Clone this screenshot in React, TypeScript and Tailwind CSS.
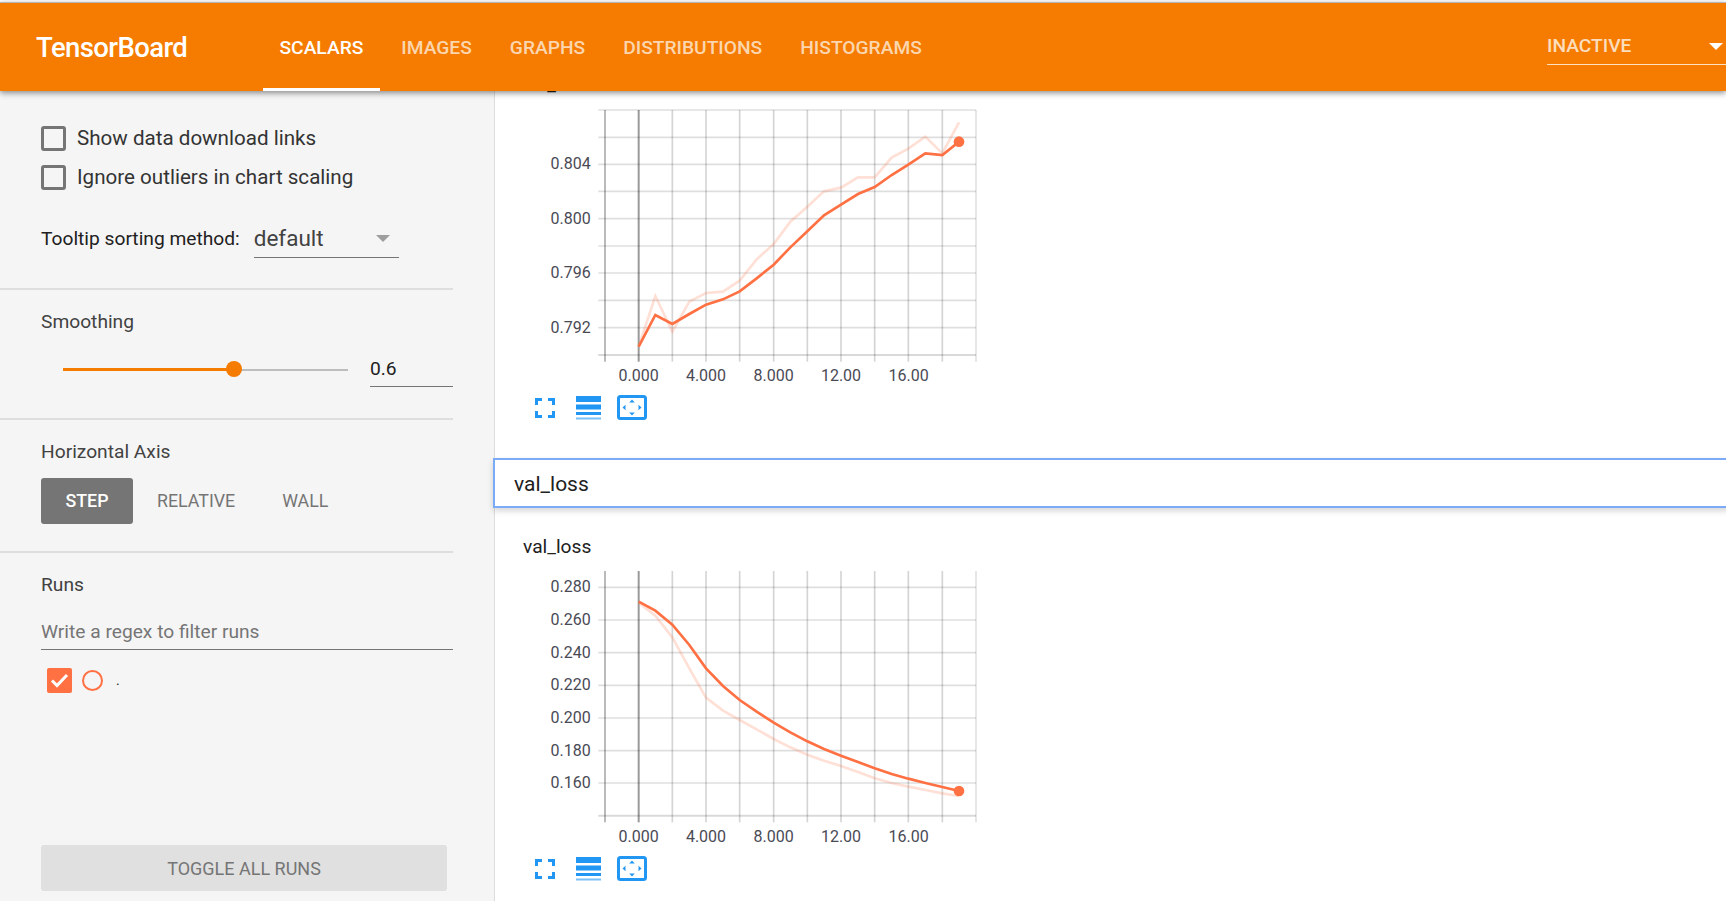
import React from "react";

type Point = [number, number];

type ChartType = {
  top: number;
  hLines: number[];
  bottom: number;
  hasTopLine?: boolean;
  labels: { y: number; text: string }[];
  smooth: Point[];
  raw: Point[];
};

const xLines = [315, 416, 517, 618, 719, 821, 922, 1023, 1124, 1225, 1327, 1428];
const xLabels = [
  { x: 416, text: "0.000" },
  { x: 618, text: "4.000" },
  { x: 821, text: "8.000" },
  { x: 1023, text: "12.00" },
  { x: 1226, text: "16.00" },
];
const xStep = [416, 466, 517, 568, 618, 669, 719, 770, 821, 871, 922, 972, 1023, 1074, 1124, 1175, 1225, 1276, 1327, 1377];

const zip = (ys: number[]): Point[] => ys.map((y, i) => [xStep[i], y]);
const toPoints = (pts: Point[]) => pts.map((p) => p.join(",")).join(" ");

// coordinates are 3x px, measured from the screenshot
const accChart: ChartType = {
  top: 120,
  bottom: 855,
  hasTopLine: true,
  hLines: [202, 283, 364, 446, 528, 609, 691, 773],
  labels: [
    { y: 283, text: "0.804" },
    { y: 446, text: "0.800" },
    { y: 609, text: "0.796" },
    { y: 773, text: "0.792" },
  ],
  smooth: zip([830, 735, 762, 732, 704, 688, 664, 625, 584, 532, 484, 436, 404, 372, 351, 315, 284, 250, 255, 215]),
  raw: zip([830, 678, 785, 695, 669, 665, 632, 568, 522, 455, 410, 364, 353, 322, 322, 263, 236, 200, 250, 157]),
};

const lossChart: ChartType = {
  top: 63,
  bottom: 797,
  hLines: [112, 210, 308, 406, 504, 602, 699],
  labels: [
    { y: 112, text: "0.280" },
    { y: 210, text: "0.260" },
    { y: 308, text: "0.240" },
    { y: 406, text: "0.220" },
    { y: 504, text: "0.200" },
    { y: 602, text: "0.180" },
    { y: 699, text: "0.160" },
  ],
  smooth: zip([155, 182, 224, 285, 355, 408, 450, 485, 518, 547, 574, 597, 617, 636, 655, 672, 686, 699, 711, 723]),
  raw: zip([158, 197, 262, 355, 443, 482, 510, 538, 567, 592, 614, 632, 648, 666, 685, 699, 710, 720, 730, 738]),
};

const ScalarChart = ({ chart, viewTop }: { chart: ChartType; viewTop: number }) => {
  const { top, bottom, hLines, hasTopLine, labels, smooth, raw } = chart;
  const last = smooth[smooth.length - 1];
  return (
    <svg width={500} height={285} viewBox={`0 ${viewTop} 1500 855`} className="block">
      {hasTopLine && <line x1={295} x2={1428} y1={top} y2={top} stroke="#000" strokeOpacity={0.13} strokeWidth={5} />}
      {hLines.map((y) => (
        <line key={y} x1={295} x2={1428} y1={y} y2={y} stroke="#000" strokeOpacity={0.13} strokeWidth={5} />
      ))}
      <line x1={295} x2={1428} y1={bottom} y2={bottom} stroke="#000" strokeOpacity={0.15} strokeWidth={6} />
      {xLines.map((x, i) => (
        <line
          key={x}
          x1={x}
          x2={x}
          y1={top}
          y2={bottom + 20}
          stroke="#000"
          strokeOpacity={i === 1 ? 0.4 : i === 0 ? 0.27 : i === 11 ? 0.12 : 0.17}
          strokeWidth={i < 2 ? 6 : 5}
        />
      ))}
      <polyline points={toPoints(raw)} fill="none" stroke="#ff7043" strokeOpacity={0.22} strokeWidth={8} />
      <polyline points={toPoints(smooth)} fill="none" stroke="#ff7043" strokeWidth={8} />
      <circle cx={last[0]} cy={last[1]} r={16} fill="#ff7043" />
      {labels.map((l) => (
        <text key={l.text} x={272} y={l.y + 15} textAnchor="end" fontSize={48} fill="#4a4a55">
          {l.text}
        </text>
      ))}
      {xLabels.map((l) => (
        <text key={l.text} x={l.x} y={bottom + 79} textAnchor="middle" fontSize={48} fill="#4a4a55">
          {l.text}
        </text>
      ))}
    </svg>
  );
};

const ChartToolbar = () => (
  <div className="flex h-[25px] items-center pl-[40px] mt-[5px]">
    <svg width={20} height={20} viewBox="0 0 20 20" fill="none" stroke="#2196f3" strokeWidth={3}>
      <path d="M1.5 7V1.5H7M13 1.5H18.5V7M18.5 13V18.5H13M7 18.5H1.5V13" />
    </svg>
    <svg width={25} height={24} viewBox="0 0 25 24" fill="#2196f3" className="ml-[21px]">
      <rect y={0} width={25} height={6} />
      <rect y={8.5} width={25} height={5} />
      <rect y={16} width={25} height={3} />
      <rect y={21.5} width={25} height={2} opacity={0.6} />
    </svg>
    <svg width={30} height={25} viewBox="0 0 30 25" fill="#2196f3" className="ml-[16px]">
      <rect x={1.5} y={1.5} width={27} height={22} rx={2} fill="none" stroke="#2196f3" strokeWidth={3} />
      <path d="M15 4.5l2.8 3h-5.6zM15 20.5l-2.8-3h5.6zM5.5 12.5l3-2.8v5.6zM24.5 12.5l-3-2.8v5.6z" />
    </svg>
  </div>
);

const ChartTitle = ({ text }: { text: string }) => (
  <div className="h-[26px] mb-[7px] pl-[28px] pt-px text-[19.2px] leading-[26px] text-[#212121]">{text}</div>
);

const Checkbox = ({ label }: { label: string }) => (
  <label className="flex items-center h-[25px] gap-[11px]">
    <span className="size-[25px] rounded-[3px] border-[3px] border-[#757575]" />
    <span className="text-[20.6px] text-[#333]">{label}</span>
  </label>
);

const Divider = () => <div className="h-[2px] w-[453px] bg-[#dedede]" />;

const Sidebar = () => (
  <aside className="flex h-full w-[495px] shrink-0 flex-col border-r border-[#dddddd] bg-[#f5f5f5]">
    <section className="h-[197px] pl-[41px] pt-[35px]">
      <div className="flex flex-col gap-[14px]">
        <Checkbox label="Show data download links" />
        <Checkbox label="Ignore outliers in chart scaling" />
      </div>
      <div className="mt-[30px] flex items-center">
        <span className="text-[19.2px] text-[#212121]">Tooltip sorting method:</span>
        <div className="ml-[14px] flex h-[38px] w-[145px] items-center justify-between border-b border-[#757575] pr-[9px]">
          <span className="text-[22.5px] text-[#424242]">default</span>
          <span className="border-x-[7px] border-t-[7px] border-x-transparent border-t-[#9e9e9e]" />
        </div>
      </div>
    </section>
    <Divider />
    <section className="h-[128px] pl-[41px] pt-[20px]">
      <div className="text-[19.2px] leading-[24px] text-[#424242]">Smoothing</div>
      <div className="mt-[11px] flex items-start">
        <div className="relative ml-[22px] mt-[23px] flex h-[3px] w-[285px] items-center">
          <div className="h-[3px] w-[171px] bg-[#f57c00]" />
          <div className="h-[2px] flex-1 bg-[#bdbdbd]" />
          <div className="absolute left-[163px] top-[-7px] size-[16px] rounded-full bg-[#f57c00]" />
        </div>
        <div className="ml-[22px] h-[42px] w-[83px] border-b border-[#757575] pt-[9px] text-[19.2px] leading-[30px] text-[#212121]">
          0.6
        </div>
      </div>
    </section>
    <Divider />
    <section className="h-[131px] pl-[41px] pt-[20px]">
      <div className="text-[19.2px] leading-[24px] text-[#424242]">Horizontal Axis</div>
      <div className="mt-[14px] flex items-center text-[17.8px] font-normal text-[#757575]">
        <div className="flex h-[46px] w-[92px] items-center justify-center rounded-[3px] bg-[#757575] font-medium text-white">
          STEP
        </div>
        <span className="ml-[24px]">RELATIVE</span>
        <span className="ml-[47px]">WALL</span>
      </div>
    </section>
    <Divider />
    <section className="flex flex-1 flex-col pl-[41px] pb-[10px] pt-[19px]">
      <div className="text-[19.2px] leading-[26px] text-[#424242]">Runs</div>
      <div className="mt-[17px] h-[35px] w-[412px] border-b border-[#757575] text-[19.2px] leading-[34px] text-[#757575]">
        Write a regex to filter runs
      </div>
      <div className="mt-[18px] flex items-center">
        <span className="ml-[6px] flex size-[25px] items-center justify-center rounded-[2px] bg-[#ff7043]">
          <svg width={19} height={15} viewBox="0 0 19 15" fill="none" stroke="#fff" strokeWidth={3}>
            <path d="M2 7.5l5 5L17 2" />
          </svg>
        </span>
        <span className="ml-[10px] size-[21px] rounded-full border-2 border-[#ff7043]" />
        <span className="ml-[13px] text-[14px] text-[#212121]">.</span>
      </div>
      <div className="mt-auto flex h-[46px] w-[406px] items-center justify-center rounded-[3px] bg-[#e0e0e0] text-[18px] text-[#757575]">
        TOGGLE ALL RUNS
      </div>
    </section>
  </aside>
);

const tabs = ["SCALARS", "IMAGES", "GRAPHS", "DISTRIBUTIONS", "HISTOGRAMS"];

const Header = () => (
  <header className="relative z-10 flex h-[89px] shrink-0 items-stretch border-t border-[#b5b5b5] bg-[#f57c00] shadow-[0_2px_6px_rgba(0,0,0,0.45)]">
    <div className="flex w-[263px] items-center pl-[36px] pt-px text-[27.5px] font-medium tracking-[-0.6px] text-white">TensorBoard</div>
    <nav className="flex gap-[5px]">
      {tabs.map((tab, i) => (
        <div
          key={tab}
          className={`flex items-center border-b-[3px] px-[16.5px] pt-[5px] text-[19.2px] font-medium ${
            i === 0 ? "border-white text-white" : "border-transparent text-white/70"
          }`}
        >
          {tab}
        </div>
      ))}
    </nav>
    <div className="ml-auto mt-[22px] flex h-[40px] w-[179px] items-center justify-between border-b border-[#ffe0c0] pr-[3px] pt-[3px] text-[19.2px] font-medium text-white/75">
      <span>INACTIVE</span>
      <span className="border-x-[7px] border-t-[7px] border-x-transparent border-t-white" />
    </div>
  </header>
);

const App = () => {
  return (
    <div className="flex h-[901px] w-full flex-col overflow-hidden bg-white pt-[2px] font-['Roboto',sans-serif]">
      <Header />
      <div className="flex min-h-0 flex-1">
        <Sidebar />
        <main className="min-w-0 flex-1">
          <div className="-mt-[20px] flex flex-col">
            <ChartTitle text="val_acc" />
            <div className="mt-px pl-[5px]">
              <ScalarChart chart={accChart} viewTop={105} />
            </div>
            <ChartToolbar />
            <div className="relative -ml-[2px] -mr-[4px] mt-[38px] flex h-[50px] items-center border-2 border-[#7baaf7] bg-white pl-[19px] pt-[3px] text-[21px] text-[#212121] shadow-[0_3px_6px_rgba(0,0,0,0.16)]">
              val_loss
            </div>
            <div className="mt-[25px]">
              <ChartTitle text="val_loss" />
            </div>
            <div className="pl-[5px]">
              <ScalarChart chart={lossChart} viewTop={48} />
            </div>
            <ChartToolbar />
          </div>
        </main>
      </div>
    </div>
  );
};

export default App;
